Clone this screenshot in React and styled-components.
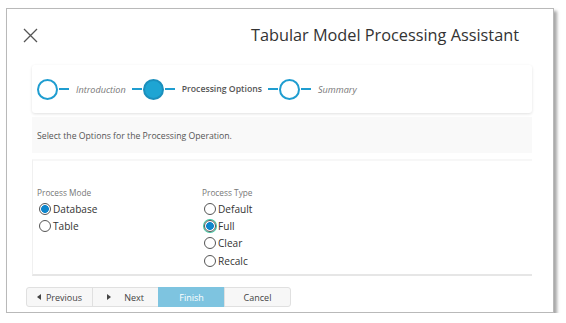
import React from 'react';
import styled, { createGlobalStyle } from 'styled-components';

const GlobalStyle = createGlobalStyle`
  html, body {
    margin: 0;
    padding: 0;
    background: #ffffff;
    font-family: "Open Sans", "Noto Sans", sans-serif;
  }
`;

const steps = [
  { label: 'Introduction', state: 'done' },
  { label: 'Processing Options', state: 'active' },
  { label: 'Summary', state: 'todo' },
];

const modes = [
  { label: 'Database', checked: true },
  { label: 'Table', checked: false },
];

const types = [
  { label: 'Default', checked: false },
  { label: 'Full', checked: true, focused: true },
  { label: 'Clear', checked: false },
  { label: 'Recalc', checked: false },
];

const App = () => {
  return (
    <>
      <GlobalStyle />
      <Frame>
        <Header>
          <CloseButton aria-label="Close">
            <svg width="15" height="15" viewBox="0 0 15 15">
              <path d="M1 1 L14 14 M14 1 L1 14" stroke="#555" strokeWidth="1.3" fill="none" />
            </svg>
          </CloseButton>
          <Title>Tabular Model Processing Assistant</Title>
        </Header>

        <Stepper>
          {steps.map((s, i) => (
            <Step key={s.label}>
              {i > 0 && <Line />}
              <Dot $filled={s.state === 'active'} />
              <Line />
              <StepLabel $active={s.state === 'active'}>{s.label}</StepLabel>
            </Step>
          ))}
        </Stepper>

        <Instruction>Select the Options for the Processing Operation.</Instruction>

        <Options>
          <Group>
            <GroupLabel>Process Mode</GroupLabel>
            {modes.map((m) => (
              <RadioRow key={m.label}>
                <Radio $checked={m.checked} />
                <RadioText>{m.label}</RadioText>
              </RadioRow>
            ))}
          </Group>
          <Group>
            <GroupLabel>Process Type</GroupLabel>
            {types.map((t) => (
              <RadioRow key={t.label}>
                <Radio $checked={t.checked} $focused={t.focused} />
                <RadioText>{t.label}</RadioText>
              </RadioRow>
            ))}
          </Group>
        </Options>

        <Buttons>
          <Button>
            <Arrow $left />
            Previous
          </Button>
          <Button $spread>
            <Arrow />
            Next
          </Button>
          <Button $primary>Finish</Button>
          <Button>Cancel</Button>
        </Buttons>
      </Frame>
    </>
  );
};

// Styled Components
const Frame = styled.div`
  box-sizing: border-box;
  width: 548px;
  height: 305px;
  margin: 8px 0 0 6px;
  background: #ffffff;
  border: 1px solid #b9b9b9;
  box-shadow: 3px 3px 3px rgba(0, 0, 0, 0.35);
  display: flex;
  flex-direction: column;
  padding: 0 21px 0 19px;
`;

const Header = styled.div`
  height: 56px;
  display: flex;
  align-items: center;
  justify-content: space-between;
  padding: 0 13px 4px 0;
  box-sizing: border-box;
`;

const CloseButton = styled.div`
  width: 15px;
  height: 15px;
  display: flex;
  margin-left: -3px;
`;

const Title = styled.h1`
  margin: 0;
  font-size: 16.3px;
  font-weight: 400;
  color: #333333;
`;

const Stepper = styled.div`
  margin-left: 6px;
  height: 48px;
  box-sizing: border-box;
  background: #ffffff;
  border-radius: 3px;
  box-shadow: 0 1px 3px rgba(0, 0, 0, 0.12);
  display: flex;
  align-items: center;
  padding-left: 5px;
`;

const Step = styled.div`
  display: flex;
  align-items: center;
`;

const Line = styled.span`
  width: 10px;
  height: 2px;
  background: #1f9dd0;
  margin: 0 1px;
`;

const Dot = styled.span`
  width: 21px;
  height: 21px;
  box-sizing: border-box;
  border-radius: 50%;
  border: 2px solid #1f9dd0;
  background: ${(p) => (p.$filled ? '#1ea5d3' : '#ffffff')};
  border-color: ${(p) => (p.$filled ? '#1b8fbc' : '#1f9dd0')};
`;

const StepLabel = styled.span`
  font-size: ${(p) => (p.$active ? '8.7px' : '9.1px')};
  margin: 0 5px 0 6px;
  color: ${(p) => (p.$active ? '#555555' : '#777777')};
  font-style: ${(p) => (p.$active ? 'normal' : 'italic')};
  font-weight: ${(p) => (p.$active ? 600 : 400)};
`;

const Instruction = styled.div`
  margin: 4px 0 0 6px;
  height: 36px;
  background: #f9f9f9;
  display: flex;
  align-items: center;
  padding: 2px 0 0 5px;
  box-sizing: border-box;
  font-size: 8.7px;
  color: #555555;
`;

const Options = styled.div`
  margin: 6px 0 0 6px;
  height: 117px;
  box-sizing: border-box;
  border-top: 2px solid #f7f7f7;
  border-bottom: 2px solid #e6e6e6;
  border-left: 1px solid #f0f0f0;
  display: grid;
  grid-template-columns: 165px 1fr;
  padding: 26px 0 0 4px;
`;

const Group = styled.div`
  display: flex;
  flex-direction: column;
`;

const GroupLabel = styled.div`
  font-size: 8.3px;
  color: #777777;
  margin-bottom: 2px;
`;

const RadioRow = styled.div`
  display: flex;
  align-items: center;
  height: 17.3px;
`;

const Radio = styled.span`
  width: 12px;
  height: 12px;
  box-sizing: border-box;
  border-radius: 50%;
  border: 1px solid #555555;
  margin: 0 2px 0 2px;
  background: ${(p) =>
    p.$checked ? 'radial-gradient(circle, #0f86cc 0 3.6px, #ffffff 4.2px)' : '#ffffff'};
  box-shadow: ${(p) => (p.$focused ? '0 0 0 1px #40c4a0' : 'none')};
`;

const RadioText = styled.span`
  font-size: 10.1px;
  color: #333333;
`;

const Buttons = styled.div`
  margin-top: 11px;
  display: flex;
`;

const Button = styled.div`
  width: 67px;
  height: 20px;
  box-sizing: border-box;
  display: flex;
  align-items: center;
  justify-content: center;
  gap: ${(p) => (p.$spread ? '13px' : '5px')};
  font-size: 9px;
  color: ${(p) => (p.$primary ? '#ffffff' : '#444444')};
  background: ${(p) => (p.$primary ? '#7ec4e0' : '#f7f7f7')};
  border: 1px solid ${(p) => (p.$primary ? '#7ec4e0' : '#e0e0e0')};
  margin-left: -1px;
  &:first-child {
    margin-left: 0;
    border-radius: 3px 0 0 3px;
  }
  &:last-child {
    border-radius: 0 3px 3px 0;
  }
`;

const Arrow = styled.span`
  width: 0;
  height: 0;
  border-top: 3px solid transparent;
  border-bottom: 3px solid transparent;
  ${(p) => (p.$left ? 'border-right: 4px solid #444;' : 'border-left: 4px solid #444;')}
`;

export default App;
